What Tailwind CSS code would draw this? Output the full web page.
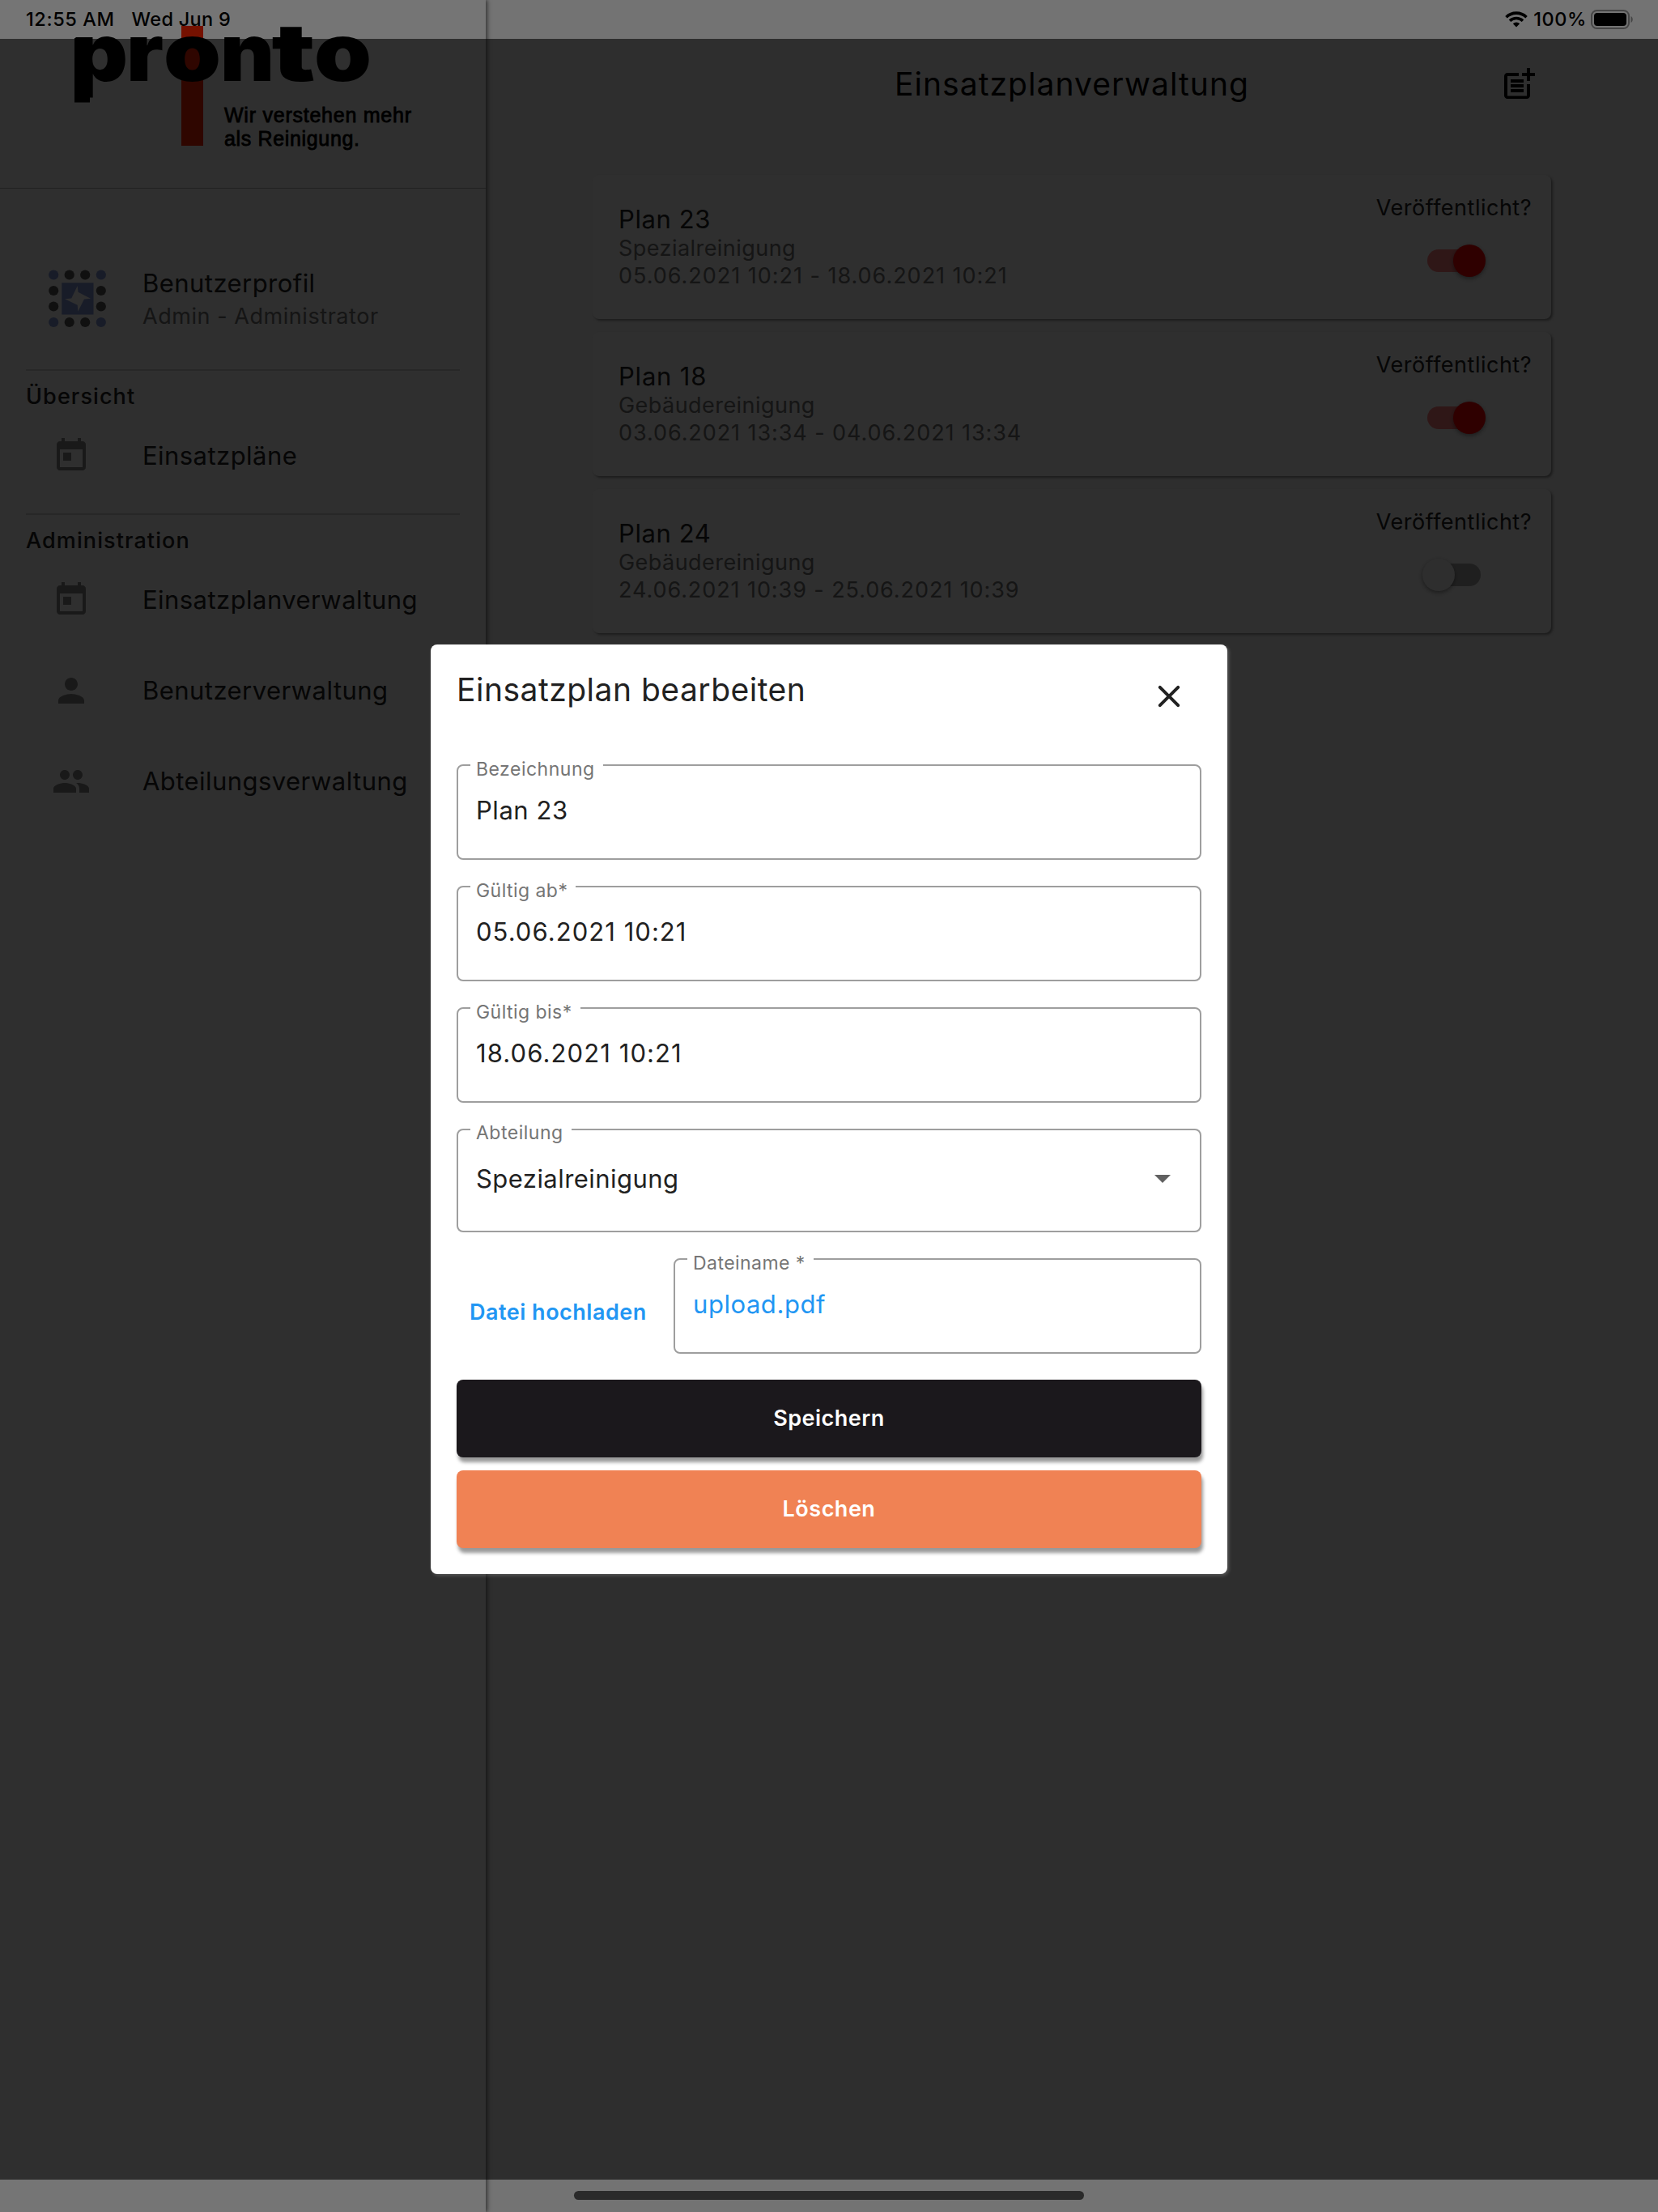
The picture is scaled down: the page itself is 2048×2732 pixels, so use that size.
<!DOCTYPE html>
<html lang="de">
<head>
<meta charset="utf-8">
<title>Einsatzplanverwaltung</title>
<script src="https://cdn.jsdelivr.net/npm/@tailwindcss/browser@4"></script>
</head>
<body class="bg-white">
<div class="relative h-[2732px] w-[2048px] overflow-hidden bg-[#fafafa] font-['Inter',sans-serif] text-[31px] font-[370] tracking-[0.45px] text-[#212121]">

  <!-- App -->
  <div class="flex h-full">
    <aside class="relative z-10 h-full w-[600px] shrink-0 bg-white shadow-[2px_0_5px_rgba(0,0,0,0.55)]">
      <div class="h-[233px] border-b border-[#b8b8b8]">
        <svg class="block h-[232px] w-[600px] tracking-normal" viewBox="0 0 600 232">
          <defs><clipPath id="logo"><rect x="0" y="32" width="600" height="200"/></clipPath></defs>
          <g clip-path="url(#logo)" class="text-[99px] font-black" fill="#000">
            <rect x="224" y="32" width="27" height="148" fill="#ff2600"/>
            <rect x="92" y="47" width="19" height="79.500"/>
            <text x="88" y="100" textLength="70" lengthAdjust="spacingAndGlyphs">p</text>
            <text x="156" y="100" textLength="46" lengthAdjust="spacingAndGlyphs">r</text>
            <text x="202" y="100" textLength="71" lengthAdjust="spacingAndGlyphs">o</text>
            <text x="272" y="100" textLength="67" lengthAdjust="spacingAndGlyphs">n</text>
            <text x="335.500" y="100" textLength="54" lengthAdjust="spacingAndGlyphs">t</text>
            <text x="388" y="100" textLength="71" lengthAdjust="spacingAndGlyphs">o</text>
          </g>
          <g class="font-['Liberation_Sans',sans-serif] text-[25px]" fill="#000" stroke="#000" stroke-width="0.8">
            <text x="277" y="151" textLength="231">Wir verstehen mehr</text>
            <text x="277" y="180" textLength="167">als Reinigung.</text>
          </g>
        </svg>
      </div>
      <div class="flex h-[223px] pt-[97px] pl-[60px]">
        <svg class="mt-[3px] h-[72px] w-[72px]" viewBox="0 0 72 72">
          <g fill="#5c5c5c">
            <circle cx="25.7" cy="6.5" r="6.1"/><circle cx="45.2" cy="6.5" r="6.1"/>
            <circle cx="6.2" cy="26" r="6.1"/><circle cx="64.8" cy="26" r="6.1"/>
            <circle cx="6.2" cy="45.5" r="6.1"/><circle cx="64.8" cy="45.5" r="6.1"/>
            <circle cx="25.7" cy="65" r="6.1"/><circle cx="45.2" cy="65" r="6.1"/>
          </g>
          <g fill="#8499dd">
            <circle cx="6.2" cy="6.5" r="6.1"/><circle cx="64.8" cy="6.5" r="6.1"/>
            <circle cx="6.2" cy="65" r="6.1"/><circle cx="64.8" cy="65" r="6.1"/>
            <rect x="16.3" y="16.3" width="39.2" height="39.2"/>
          </g>
          <path fill="#fff" d="M35.7 20 36.5 27.8 52 35.8 44 36.5 36.3 51.7 35.7 43.8 20 36.2 28.2 35.500z"/>
        </svg>
        <div class="ml-11">
          <div class="leading-10">Benutzerprofil</div>
          <div class="mt-[3px] text-[27px] leading-9 tracking-[0.55px] text-[#757575]">Admin - Administrator</div>
        </div>
      </div>
      <div class="mx-8 h-0.5 bg-[#d4d4d4]"></div>
      <div class="mt-[14px] pl-8 text-[27px] leading-9 font-medium tracking-[1.1px]">Übersicht</div>
      <div class="-mt-px flex h-28 items-center pl-16">
        <svg class="h-12 w-12 text-[#8c8c8c]" viewBox="0 0 24 24" fill="currentColor"><path d="M19 3h-1V1h-2v2H8V1H6v2H5c-1.11 0-1.99.9-1.99 2L3 19c0 1.1.89 2 2 2h14c1.1 0 2-.9 2-2V5c0-1.1-.9-2-2-2zm0 16H5V8h14v11zM7 10h5v5H7v-5z"/></svg>
        <span class="ml-16">Einsatzpläne</span>
      </div>
      <div class="mx-8 mt-[15px] h-0.5 bg-[#d4d4d4]"></div>
      <div class="mt-[14px] pl-8 text-[27px] leading-9 font-medium tracking-[1.1px]">Administration</div>
      <div class="-mt-px flex h-28 items-center pl-16">
        <svg class="h-12 w-12 text-[#8c8c8c]" viewBox="0 0 24 24" fill="currentColor"><path d="M19 3h-1V1h-2v2H8V1H6v2H5c-1.11 0-1.99.9-1.99 2L3 19c0 1.1.89 2 2 2h14c1.1 0 2-.9 2-2V5c0-1.1-.9-2-2-2zm0 16H5V8h14v11zM7 10h5v5H7v-5z"/></svg>
        <span class="ml-16">Einsatzplanverwaltung</span>
      </div>
      <div class="flex h-28 items-center pl-16">
        <svg class="h-12 w-12 text-[#8c8c8c]" viewBox="0 0 24 24" fill="currentColor"><path d="M12 12c2.21 0 4-1.79 4-4s-1.79-4-4-4-4 1.79-4 4 1.79 4 4 4zm0 2c-2.67 0-8 1.34-8 4v2h16v-2c0-2.66-5.33-4-8-4z"/></svg>
        <span class="ml-16">Benutzerverwaltung</span>
      </div>
      <div class="flex h-28 items-center pl-16">
        <svg class="h-12 w-12 text-[#8c8c8c]" viewBox="0 0 24 24" fill="currentColor"><path d="M16 11c1.66 0 2.99-1.34 2.99-3S17.66 5 16 5c-1.66 0-3 1.34-3 3s1.34 3 3 3zm-8 0c1.66 0 2.99-1.34 2.99-3S9.66 5 8 5C6.34 5 5 6.34 5 8s1.34 3 3 3zm0 2c-2.33 0-7 1.17-7 3.5V19h14v-2.5c0-2.33-4.67-3.5-7-3.5zm8 0c-.29 0-.62.02-.97.05 1.16.84 1.97 1.97 1.97 3.45V19h6v-2.5c0-2.33-4.67-3.5-7-3.5z"/></svg>
        <span class="ml-16">Abteilungsverwaltung</span>
      </div>
    </aside>

    <main class="flex-1">
      <header class="grid h-52 grid-cols-[1fr_auto_1fr] items-center pr-[148px] pl-[148px]">
        <span></span>
        <h1 class="pb-0.5 text-[39px] leading-none font-[370] tracking-[1.05px] text-black">Einsatzplanverwaltung</h1>
        <svg class="h-12 w-12 justify-self-end" viewBox="0 0 24 24" fill="#000"><path d="M17 19.22H5V7h7V5H5c-1.1 0-2 .9-2 2v12c0 1.1.9 2 2 2h12c1.1 0 2-.9 2-2v-7h-2v7.22z"/><path d="M19 2h-2v3h-3c.01.01 0 2 0 2h3v2.99c.01.01 2 0 2 0V7h3V5h-3V2zM7 9h8v2H7zM7 12v2h8v-2H7zM7 15h8v2H7z"/></svg>
      </header>
      <div class="mx-auto mt-2 flex w-[1184px] flex-col gap-4">
        <section class="flex h-[178px] justify-between rounded-lg bg-white pr-6 pl-8 shadow-[2px_2px_3px_rgba(0,0,0,0.4)]">
          <div class="pt-9 text-[27px] leading-[34px] text-[#757575]">
            <div class="text-[31px] leading-[38px] tracking-[0.6px] text-[#212121]">Plan 23</div>
            <div>Spezialreinigung</div>
            <div class="tracking-[0.98px]">05.06.2021 10:21 - 18.06.2021 10:21</div>
          </div>
          <div class="flex flex-col items-center pt-[23px] text-[27px] leading-9">
            <span class="tracking-[0.5px]">Veröffentlicht?</span>
            <div class="mt-[27px] flex h-10 w-[78px] items-center px-1.5"><div class="flex h-7 w-full items-center justify-end rounded-full bg-[#ff8080]"><div class="-mr-1.5 h-10 w-10 shrink-0 rounded-full bg-[#ff0000] shadow-[0_2px_5px_rgba(0,0,0,0.4)]"></div></div></div>
          </div>
        </section>
        <section class="flex h-[178px] justify-between rounded-lg bg-white pr-6 pl-8 shadow-[2px_2px_3px_rgba(0,0,0,0.4)]">
          <div class="pt-9 text-[27px] leading-[34px] text-[#757575]">
            <div class="text-[31px] leading-[38px] tracking-[0.8px] text-[#212121]">Plan 18</div>
            <div>Gebäudereinigung</div>
            <div class="tracking-[0.92px]">03.06.2021 13:34 - 04.06.2021 13:34</div>
          </div>
          <div class="flex flex-col items-center pt-[23px] text-[27px] leading-9">
            <span class="tracking-[0.5px]">Veröffentlicht?</span>
            <div class="mt-[27px] flex h-10 w-[78px] items-center px-1.5"><div class="flex h-7 w-full items-center justify-end rounded-full bg-[#ff8080]"><div class="-mr-1.5 h-10 w-10 shrink-0 rounded-full bg-[#ff0000] shadow-[0_2px_5px_rgba(0,0,0,0.4)]"></div></div></div>
          </div>
        </section>
        <section class="flex h-[178px] justify-between rounded-lg bg-white pr-6 pl-8 shadow-[2px_2px_3px_rgba(0,0,0,0.4)]">
          <div class="pt-9 text-[27px] leading-[34px] text-[#757575]">
            <div class="text-[31px] leading-[38px] tracking-[0.6px] text-[#212121]">Plan 24</div>
            <div>Gebäudereinigung</div>
            <div class="tracking-[0.92px]">24.06.2021 10:39 - 25.06.2021 10:39</div>
          </div>
          <div class="flex flex-col items-center pt-[23px] text-[27px] leading-9">
            <span class="tracking-[0.5px]">Veröffentlicht?</span>
            <div class="mt-[27px] flex h-10 w-[78px] items-center px-1.5"><div class="flex h-7 w-full items-center rounded-full bg-[#adadad]"><div class="-ml-1.5 h-10 w-10 shrink-0 rounded-full bg-[#fafafa] shadow-[0_2px_5px_rgba(0,0,0,0.4)]"></div></div></div>
          </div>
        </section>
      </div>
    </main>
  </div>

  <!-- Scrims -->
  <div class="absolute inset-0 z-20 bg-black/54"></div>
  <div class="absolute inset-x-0 top-12 bottom-10 z-20 bg-black/60"></div>

  <!-- Dialog -->
  <div class="absolute inset-x-0 top-12 bottom-10 z-30 flex items-center justify-center">
    <div class="flex h-[1148px] w-[984px] flex-col rounded-lg bg-white p-8 shadow-[2px_2px_4px_rgba(255,255,255,0.2)]">
      <div class="flex h-[116px] shrink-0 items-start justify-between">
        <h2 class="text-[39px] leading-12 font-[370] tracking-[0.5px]">Einsatzplan bearbeiten</h2>
        <svg class="mt-2 mr-4 h-12 w-12" viewBox="0 0 24 24" fill="#212121"><path d="M18.3 5.71c-.39-.39-1.02-.39-1.41 0L12 10.59 7.11 5.7c-.39-.39-1.02-.39-1.41 0s-.39 1.02 0 1.41L10.59 12 5.7 16.89c-.39.39-.39 1.02 0 1.41.39.39 1.02.39 1.41 0L12 13.41l4.89 4.89c.39.39 1.02.39 1.41 0 .39-.39.39-1.02 0-1.41L13.41 12l4.89-4.89c.38-.38.38-1.02 0-1.4z"/></svg>
      </div>
      <div class="flex flex-col gap-8">
        <fieldset class="h-[118px] rounded-lg border-2 border-[#9e9e9e] pl-[15px]">
          <legend class="h-0.5 pr-[10px] pl-[7px] text-[23px] leading-[12px] tracking-[0.5px] text-[#757575]">Bezeichnung</legend>
          <div class="mt-[35px] pl-[7px] leading-10 tracking-[0.55px]">Plan 23</div>
        </fieldset>
        <fieldset class="h-[118px] rounded-lg border-2 border-[#9e9e9e] pl-[15px]">
          <legend class="h-0.5 pr-[10px] pl-[7px] text-[23px] leading-[12px] tracking-[0.45px] text-[#757575]">Gültig ab*</legend>
          <div class="mt-[35px] pl-[7px] leading-10 tracking-[1.05px]">05.06.2021 10:21</div>
        </fieldset>
        <fieldset class="h-[118px] rounded-lg border-2 border-[#9e9e9e] pl-[15px]">
          <legend class="h-0.5 pr-[10px] pl-[7px] text-[23px] leading-[12px] tracking-[0.45px] text-[#757575]">Gültig bis*</legend>
          <div class="mt-[35px] pl-[7px] leading-10 tracking-[1.1px]">18.06.2021 10:21</div>
        </fieldset>
        <fieldset class="h-32 rounded-lg border-2 border-[#9e9e9e] pr-9 pl-[15px]">
          <legend class="h-0.5 pr-[10px] pl-[7px] text-[23px] leading-[11px] tracking-[0.5px] text-[#757575]">Abteilung</legend>
          <div class="mt-10 flex items-center justify-between pl-[7px] leading-10">
            <span>Spezialreinigung</span>
            <svg class="h-2.5 w-5" viewBox="0 0 20 10"><path d="M0 0h20L10 10z" fill="#616161"/></svg>
          </div>
        </fieldset>
        <div class="flex">
          <div class="w-[268px] pt-[49px] pl-4 text-[27px] leading-9 font-semibold tracking-[0.5px] text-[#2196f3]">Datei hochladen</div>
          <fieldset class="h-[118px] flex-1 rounded-lg border-2 border-[#9e9e9e] pl-[15px]">
            <legend class="h-0.5 pr-[10px] pl-[7px] text-[23px] leading-[12px] tracking-[0.45px] text-[#757575]">Dateiname *</legend>
            <div class="mt-[35px] pl-[7px] leading-10 tracking-[0.55px] text-[#2196f3]">upload.pdf</div>
          </fieldset>
        </div>
        <div class="flex flex-col gap-4 text-[27px] font-semibold tracking-[0.5px] text-white">
          <button class="h-24 rounded-lg bg-[#1b181c] shadow-[2px_6px_4px_rgba(0,0,0,0.4)]">Speichern</button>
          <button class="h-24 rounded-lg bg-[#f08254] shadow-[2px_6px_4px_rgba(0,0,0,0.4)]">Löschen</button>
        </div>
      </div>
    </div>
  </div>

  <!-- System status bar -->
  <div class="absolute inset-x-0 top-0 z-40 flex h-12 items-center pr-[31px] pl-8 text-[23.5px] font-medium tracking-[0.6px] text-black">
    <span>12:55 AM</span>
    <span class="ml-[21px] tracking-[0.3px]">Wed Jun 9</span>
    <svg class="ml-auto h-5 w-7" viewBox="0 0 28 20"><g fill="none" stroke="#000" stroke-width="3.6"><path d="M1.5 7.2a18 18 0 0 1 25 0"/><path d="M6 11.8a11.5 11.5 0 0 1 16 0"/></g><path d="M14 19.5 9.8 15.2a6 6 0 0 1 8.4 0z"/></svg>
    <span class="ml-[7px]">100%</span>
    <svg class="ml-[5px] h-6 w-[52px]" viewBox="0 0 52 24"><rect x="1" y="1" width="46" height="22" rx="6.5" fill="none" stroke="#000" stroke-opacity=".4" stroke-width="2"/><rect x="4" y="4" width="40" height="16" rx="4" fill="#000"/><path d="M49.5 8c3 1.400 3 6.600 0 8z" fill="#000" fill-opacity=".4"/></svg>
  </div>

  <!-- Home indicator -->
  <div class="absolute inset-x-0 bottom-[15px] z-40 mx-auto h-[11px] w-[630px] rounded-full bg-[#2a2a2a]"></div>
</div>
</body>
</html>
